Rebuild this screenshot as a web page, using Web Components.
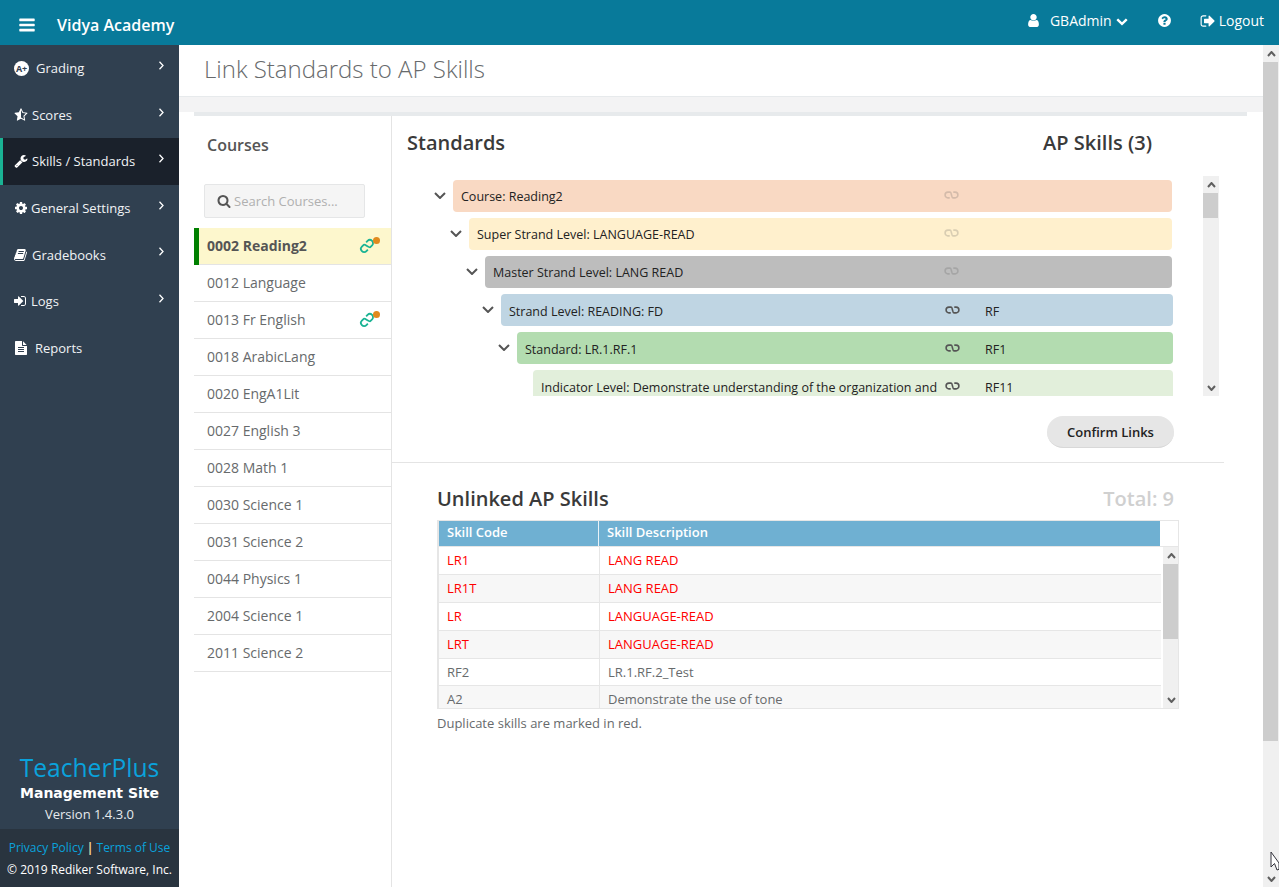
<!DOCTYPE html>
<html lang="en">
<head>
<meta charset="utf-8">
<title>Link Standards to AP Skills</title>
<style>
  html, body { margin: 0; height: 887px; overflow: hidden; background: #fff; }
  body { font-family: 'Open Sans', 'Liberation Sans', sans-serif; font-size: 13px; color: #676a6c; }
</style>
</head>
<body>
<app-shell></app-shell>
<script>
const ICONS = {
  bars: 'M1664 1344v128q0 26-19 45t-45 19h-1408q-26 0-45-19t-19-45v-128q0-26 19-45t45-19h1408q26 0 45 19t19 45zm0-512v128q0 26-19 45t-45 19h-1408q-26 0-45-19t-19-45v-128q0-26 19-45t45-19h1408q26 0 45 19t19 45zm0-512v128q0 26-19 45t-45 19h-1408q-26 0-45-19t-19-45v-128q0-26 19-45t45-19h1408q26 0 45 19t19 45z',
  user: 'M1536 1399q0 109-62.5 187t-150.5 78h-854q-88 0-150.5-78t-62.5-187q0-85 8.5-160.5t31.5-152 58.5-131 94-89 134.5-34.5q131 128 313 128t313-128q76 0 134.5 34.5t94 89 58.5 131 31.5 152 8.5 160.5zm-256-887q0 159-112.5 271.5t-271.5 112.5-271.5-112.5-112.5-271.5 112.5-271.5 271.5-112.5 271.5 112.5 112.5 271.5z',
  down: 'M1683 808l-742 741q-19 19-45 19t-45-19l-742-741q-19-19-19-45.5t19-45.5l166-165q19-19 45-19t45 19l531 531 531-531q19-19 45-19t45 19l166 165q19 19 19 45.5t-19 45.5z',
  search: 'M1216 832q0-185-131.5-316.5t-316.5-131.5-316.5 131.5-131.5 316.5 131.5 316.5 316.5 131.5 316.5-131.5 131.5-316.5zm512 832q0 52-38 90t-90 38q-54 0-90-38l-343-342q-179 124-399 124-143 0-273.5-55.5t-225-150-150-225-55.5-273.5 55.5-273.5 150-225 225-150 273.5-55.5 273.5 55.5 225 150 150 225 55.5 273.5q0 220-124 399l343 343q37 37 37 90z',
  question: 'M1024 1376v-192q0-14-9-23t-23-9h-192q-14 0-23 9t-9 23v192q0 14 9 23t23 9h192q14 0 23-9t9-23zm256-672q0-88-55.5-163t-138.5-116-170-41q-243 0-371 213-15 24 8 42l132 100q7 6 19 6 16 0 25-12 53-68 86-92 34-24 86-24 48 0 85.5 26t37.5 59q0 38-20 61t-68 45q-63 28-115.5 86.5t-52.5 125.5v36q0 14 9 23t23 9h192q14 0 23-9t9-23q0-19 21.5-49.5t54.5-49.5q32-18 49-28.5t46-35 44.5-48 28-60.5 12.5-81zm384 192q0 209-103 385.5t-279.5 279.5-385.5 103-385.5-103-279.5-279.5-103-385.5 103-385.5 279.5-279.5 385.5-103 385.5 103 279.5 279.5 103 385.5z',
  signout: 'M704 1440q0 4 1 20t.5 26.5-3 23.5-10 19.5-20.5 6.5h-320q-119 0-203.5-84.5t-84.5-203.5v-704q0-119 84.5-203.5t203.5-84.5h320q13 0 22.5 9.5t9.5 22.5q0 4 1 20t.5 26.5-3 23.5-10 19.5-20.5 6.5h-320q-66 0-113 47t-47 113v704q0 66 47 113t113 47h312l11.5 1 11.5 3 8 5.5 7 9 2 13.5zm928-544q0 26-19 45l-544 544q-19 19-45 19t-45-19-19-45v-288h-448q-26 0-45-19t-19-45v-384q0-26 19-45t45-19h448v-288q0-26 19-45t45-19 45 19l544 544q19 19 19 45z',
  signin: 'M1184 896q0 26-19 45l-544 544q-19 19-45 19t-45-19-19-45v-288h-448q-26 0-45-19t-19-45v-384q0-26 19-45t45-19h448v-288q0-26 19-45t45-19 45 19l544 544q19 19 19 45zm352-352v704q0 119-84.5 203.5t-203.5 84.5h-320q-13 0-22.5-9.5t-9.5-22.5q0-4-1-20t-.5-26.5 3-23.5 10-19.5 20.5-6.5h320q66 0 113-47t47-113v-704q0-66-47-113t-113-47h-312l-11.5-1-11.5-3-8-5.5-7-9-2-13.5q0-4-1-20t-.5-26.5 3-23.5 10-19.5 20.5-6.5h320q119 0 203.5 84.5t84.5 203.5z',
  cog: 'M1152 896q0-106-75-181t-181-75-181 75-75 181 75 181 181 75 181-75 75-181zm512-109v222q0 12-8 23t-20 13l-185 28q-19 54-39 91 35 50 107 138 10 12 10 25t-9 23q-27 37-99 108t-94 71q-12 0-26-9l-138-108q-44 23-91 38-16 136-29 186-7 28-36 28h-222q-14 0-24.5-8.5t-11.5-21.5l-28-184q-49-16-90-37l-141 107q-10 9-25 9-14 0-25-11-126-114-165-168-7-10-7-23 0-12 8-23 15-21 51-66.5t54-70.5q-27-50-41-99l-183-27q-13-2-21-12.5t-8-23.5v-222q0-12 8-23t19-13l186-28q14-46 39-92-40-57-107-138-10-12-10-24 0-10 9-23 26-36 98.5-107.5t94.5-71.5q13 0 26 10l138 107q44-23 91-38 16-136 29-186 7-28 36-28h222q14 0 24.5 8.5t11.5 21.5l28 184q49 16 90 37l142-107q9-9 24-9 13 0 25 10 129 119 165 170 7 8 7 22 0 12-8 23-15 21-51 66.5t-54 70.5q26 50 41 98l183 28q13 2 21 12.5t8 23.5z',
  wrench: 'M448 1472q0-26-19-45t-45-19-45 19-19 45 19 45 45 19 45-19 19-45zm644-420l-682 682q-37 37-90 37-52 0-91-37l-106-108q-38-36-38-90 0-53 38-91l681-681q39 98 114.5 173.5t173.5 114.5zm634-435q0 39-23 106-47 134-164.5 217.5t-258.5 83.5q-185 0-316.5-131.5t-131.5-316.5 131.5-316.5 316.5-131.5q58 0 121.5 16.5t107.5 46.5q16 11 16 28t-16 28l-293 169v224l193 107q5-3 79-48.5t135.5-81 70.5-35.5q15 0 23.5 10t8.5 25z',
  book: 'M1639 478q40 57 18 129l-275 906q-19 64-76.5 107.5t-122.5 43.5h-923q-77 0-148.5-53.5t-99.5-131.5q-24-67-2-127 0-4 3-27t4-37q1-8-3-21.5t-3-19.5q2-11 8-21t16.5-23.5 16.5-23.5q23-38 45-91.5t30-91.5q3-10 .5-30t-.5-28q3-11 17-28t17-23q21-36 42-92t25-90q1-9-2.5-32t.5-28q4-13 22-30.5t22-22.5q19-26 42.5-84.5t27.5-96.5q1-8-3-25.5t-2-26.5q2-8 9-18t18-23 17-21q8-12 16.5-30.5t15-35 16-36 19.5-32 26.5-23.5 36-11.5 47.5 5.5l-1 3q38-9 51-9h761q74 0 114 56t18 130l-274 906q-36 119-71.5 153.5t-128.5 34.5h-869q-27 0-38 15-11 16-1 43 24 70 144 70h923q29 0 56-15.5t35-41.5l300-987q7-22 5-57 38 15 59 43zm-1064 2q-4 13 2 22.5t20 9.5h608q13 0 25.5-9.5t16.5-22.5l21-64q4-13-2-22.5t-20-9.5h-608q-13 0-25.5 9.5t-16.5 22.5zm-83 256q-4 13 2 22.5t20 9.5h608q13 0 25.5-9.5t16.5-22.5l21-64q4-13-2-22.5t-20-9.5h-608q-13 0-25.5 9.5t-16.5 22.5z',
  file: 'M1596 476q14 14 28 36h-472v-472q22 14 36 28zm-476 164h544v1056q0 40-28 68t-68 28h-1344q-40 0-68-28t-28-68v-1600q0-40 28-68t68-28h800v544q0 40 28 68t68 28zm160 736v-64q0-14-9-23t-23-9h-704q-14 0-23 9t-9 23v64q0 14 9 23t23 9h704q14 0 23-9t9-23zm0-256v-64q0-14-9-23t-23-9h-704q-14 0-23 9t-9 23v64q0 14 9 23t23 9h704q14 0 23-9t9-23zm0-256v-64q0-14-9-23t-23-9h-704q-14 0-23 9t-9 23v64q0 14 9 23t23 9h704q14 0 23-9t9-23z',
  star: 'M1250 957l257-250-356-52-66-10-30-60-159-322v963l59 31 318 168-60-355-12-66zm452-262l-363 354 86 500q5 33-6 51.5t-34 18.5q-17 0-40-12l-449-236-449 236q-23 12-40 12-23 0-34-18.5t-6-51.5l86-500-364-354q-32-32-23-59.5t54-34.5l502-73 225-455q20-41 49-41 28 0 49 41l225 455 502 73q45 7 54 34.5t-24 59.5z',
}

function icon(name, size, color) {
  return `<svg width="${size}" height="${size}" viewBox="0 0 1792 1792" style="display:block;flex:none"><path fill="${color}" d="${ICONS[name]}"/></svg>`
}

// chain drawn as one S shaped stroke, horizontal unless rotated
function chain(color, rotate) {
  const t = rotate ? `transform="rotate(${rotate} 8 8)"` : ''
  const y = rotate ? 3.5 : 0
  const h = rotate ? 16 : 9
  return `<svg width="${rotate ? 16 : 15}" height="${rotate ? 16 : 8}" viewBox="0 0 16 ${h}" style="display:block;flex:none"><g ${t}><g transform="translate(0 ${y})" fill="none" stroke="${color}" stroke-width="1.8">
    <path d="M6 7.7H4a3.2 3.2 0 0 1 0-6.4H6.5C8 1.3 8 7.7 9.5 7.7H12a3.2 3.2 0 0 0 0-6.4H10"/>
  </g></g></svg>`
}

function chevron(w, h, color, sw, up) {
  const pts = up ? `1,${h - 1} ${w / 2},1 ${w - 1},${h - 1}` : `1,1 ${w / 2},${h - 1} ${w - 1},1`
  return `<svg width="${w}" height="${h}" viewBox="0 0 ${w} ${h}" style="display:block;flex:none"><polyline points="${pts}" fill="none" stroke="${color}" stroke-width="${sw}"/></svg>`
}

class BaseEl extends HTMLElement {
  connectedCallback() {
    if (!this.shadowRoot) this.attachShadow({ mode: 'open' })
    this.shadowRoot.innerHTML = this.render()
  }
}

class FakeScrollbar extends BaseEl {
  render() {
    const before = this.getAttribute('before') ?? 0
    const thumb = this.getAttribute('thumb') ?? 0
    const w = this.getAttribute('thumb-width') ?? 15
    return `
      <style>
        :host { display: flex; flex-direction: column; background: #f0f0f0; flex: none; }
        .btn { height: 17px; display: flex; align-items: center; justify-content: center; flex: none; }
        .track { flex: 1; }
        .thumb { background: #cdcdcd; width: ${w}px; height: ${thumb}px; margin-top: ${before}px; }
      </style>
      <div class="btn">${chevron(9, 6, '#606060', 2, true)}</div>
      <div class="track"><div class="thumb"></div></div>
      <div class="btn">${chevron(9, 6, '#606060', 2)}</div>
    `
  }
}

class AppTopbar extends BaseEl {
  render() {
    return `
      <style>
        :host { display: flex; align-items: center; height: 45px; background: #087a9a; color: #fff; font-size: 14px; flex: none; }
        .burger { margin-left: 18px; position: relative; top: 2px; }
        .brand { margin-left: 21px; font-size: 16px; font-weight: 600; position: relative; top: 2px; }
        .right { margin-left: auto; display: flex; align-items: center; padding-right: 15px; margin-top: -4px; }
        .item { display: flex; align-items: center; }
      </style>
      <div class="burger">${icon('bars', 18, '#fff')}</div>
      <div class="brand">Vidya Academy</div>
      <div class="right">
        <div class="item" style="gap:9px">${icon('user', 15, '#fff')}<span>GBAdmin</span></div>
        <div class="item" style="margin-left:4px">${icon('down', 12, '#fff')}</div>
        <div class="item" style="margin-left:29px">${icon('question', 15, '#fff')}</div>
        <div class="item" style="margin-left:28px;gap:3px">${icon('signout', 16, '#fff')}<span>Logout</span></div>
      </div>
    `
  }
}

class NavItem extends BaseEl {
  render() {
    const ic = this.getAttribute('icon')
    const tx = +this.getAttribute('tx')
    const active = this.hasAttribute('active')
    const arrow = !this.hasAttribute('no-arrow')
    const glyph = ic === 'grade'
      ? `<span class="grade">A+</span>`
      : icon(ic, +(this.getAttribute('size') ?? 14), '#fff')
    return `
      <style>
        :host { display: flex; align-items: center; height: 46.6px; padding: 0 0 0.3px 14px; box-sizing: border-box; color: #f1f3f5; font-size: 13px; position: relative; ${active ? 'background: #1a212b;' : ''} }
        .bar { position: absolute; left: 0; top: 0; bottom: 0; width: 3px; background: #1ab394; }
        .ic { width: ${tx - 14}px; flex: none; }
        .grade { display: flex; align-items: center; justify-content: center; width: 15px; height: 15px; border-radius: 50%; background: #fff; color: #2f4050; font-size: 9px; font-weight: 700; letter-spacing: -.3px; }
        .arrow { position: absolute; left: 158px; top: 16px; }
      </style>
      ${active ? '<div class="bar"></div>' : ''}
      <div class="ic">${glyph}</div>
      <span><slot></slot></span>
      ${arrow ? `<svg class="arrow" width="7" height="9" viewBox="0 0 7 9"><polyline points="1.5,.8 5,4.5 1.5,8.2" fill="none" stroke="#fff" stroke-width="1.3"/></svg>` : ''}
    `
  }
}

class AppSidebar extends BaseEl {
  render() {
    return `
      <style>
        :host { display: flex; flex-direction: column; width: 179px; flex: none; background: #304050; color: #fff; }
        .foot { margin-top: auto; text-align: center; padding-bottom: 4px; }
        .tp { font-size: 24.6px; font-weight: 500; line-height: 30px; color: #0aa2dc; }
        .ms { font-family: 'DejaVu Sans', sans-serif; font-size: 14px; font-weight: 700; line-height: 20px; }
        .ver { font-size: 13px; line-height: 22px; color: #e6eaed; }
        .legal { height: 58px; box-sizing: border-box; background: #29343f; text-align: center; font-size: 12px; padding-top: 8px; line-height: 22px; white-space: nowrap; }
        .legal a { color: #0aa2dc; }
        .legal i { font-style: normal; font-weight: 700; color: #f3d9a0; }
      </style>
      <slot></slot>
      <div class="foot">
        <div class="tp">TeacherPlus</div>
        <div class="ms">Management Site</div>
        <div class="ver">Version 1.4.3.0</div>
      </div>
      <div class="legal">
        <div><a>Privacy Policy</a> <i>|</i> <a>Terms of Use</a></div>
        <div>© 2019 Rediker Software, Inc.</div>
      </div>
    `
  }
}

class CourseItem extends BaseEl {
  render() {
    const selected = this.hasAttribute('selected')
    const linked = this.hasAttribute('linked')
    return `
      <style>
        :host { display: flex; align-items: center; height: 37px; box-sizing: border-box; border-bottom: 1px solid #e4e4e4; padding: 0 0 2px 13px; font-size: 14px; color: #676a6c; position: relative; ${selected ? 'background: #fdf7cd; font-weight: 700; color: #555;' : ''} }
        .mark { position: absolute; left: 0; top: 0; bottom: -1px; width: 5px; background: #008000; }
        .ln { position: absolute; left: 165px; top: 10px; }
        .dot { position: absolute; left: 179px; top: 9px; width: 7px; height: 7px; border-radius: 50%; background: #e08a1e; }
      </style>
      ${selected ? '<div class="mark"></div>' : ''}
      <span><slot></slot></span>
      ${linked ? `<div class="ln">${chain('#1ab394', -45)}</div><div class="dot"></div>` : ''}
    `
  }
}

class CoursePanel extends BaseEl {
  render() {
    return `
      <style>
        :host { display: block; width: 197px; flex: none; border-right: 1px solid #e4e4e4; }
        h3 { margin: 0; padding: 18px 0 0 13px; font-size: 16px; line-height: 22px; font-weight: 600; color: #555; }
        .search { display: flex; align-items: center; gap: 3px; margin: 28px 26px 10px 10px; height: 34px; box-sizing: border-box; padding-left: 12px; background: #f5f5f5; border: 1px solid #e5e6e7; border-radius: 2px; color: #b0b0b0; font-size: 13px; }
      </style>
      <h3>Courses</h3>
      <div class="search">${icon('search', 14, '#555')}<span>Search Courses...</span></div>
      <slot></slot>
    `
  }
}

class TreeRow extends BaseEl {
  render() {
    const depth = +this.getAttribute('depth')
    const color = this.getAttribute('color')
    const ap = this.getAttribute('ap') ?? ''
    const right = +(this.getAttribute('right') ?? 31)
    const muted = this.hasAttribute('muted')
    const leaf = this.hasAttribute('leaf')
    const drop = depth >= 3 ? 1 : 0
    return `
      <style>
        :host { display: flex; margin-left: ${39 + depth * 16}px; margin-right: ${right}px; margin-bottom: 6px; }
        .tog { width: 22px; flex: none; padding-top: 12px; padding-left: 3px; box-sizing: border-box; }
        .box { flex: 1; min-width: 0; display: flex; height: 32px; background: ${color}; border-radius: 4px; color: #222; font-size: 12.5px; line-height: 17px; }
        .label { flex: 1; min-width: 0; padding: ${8 + drop}px 0 0 8px; white-space: nowrap; }
        .ln { width: ${41 - drop}px; flex: none; padding: ${11 + drop}px 0 0 ${drop}px; ${muted ? 'opacity: .22;' : ''} }
        .ap { width: ${218 - right}px; flex: none; padding-top: 9px; }
      </style>
      <div class="tog">${leaf ? '' : chevron(12, 7, '#555', 2)}</div>
      <div class="box">
        <div class="label"><slot></slot></div>
        <div class="ln">${chain('#555')}</div>
        <div class="ap">${ap}</div>
      </div>
    `
  }
}

class StandardsTree extends BaseEl {
  render() {
    return `
      <style>
        :host { display: flex; height: 220px; margin-left: 0; }
        .scroll { width: 811px; flex: none; overflow: hidden; padding-top: 4px; box-sizing: border-box; }
        fake-scrollbar { width: 16px; }
      </style>
      <div class="scroll"><slot></slot></div>
      <fake-scrollbar before="0" thumb="25"></fake-scrollbar>
    `
  }
}

class SkillTable extends BaseEl {
  render() {
    const rows = JSON.parse(this.getAttribute('rows') ?? '[]')
    return `
      <style>
        :host { display: flex; flex-direction: column; width: 742px; height: 189px; box-sizing: border-box; border: 1px solid #e6e6e6; border-left-width: 2px; overflow: hidden; font-size: 13px; }
        .head { display: flex; height: 26px; box-sizing: border-box; flex: none; border-bottom: 1px solid #e6e6e6; }
        .head .cols { width: 721px; display: grid; grid-template-columns: 159px 1fr; background: #6fb0d2; color: #fff; font-weight: 600; line-height: 23px; }
        .head .c { padding-left: 8px; }
        .head .c + .c { border-left: 1px solid #e8f2f8; }
        .body { flex: 1; min-height: 0; display: flex; }
        .rows { width: 722px; flex: none; overflow: hidden; }
        .row { display: grid; grid-template-columns: 160px 1fr; height: 27.88px; box-sizing: border-box; border-bottom: 1px solid #e6e6e6; line-height: 27px; color: #676a6c; }
        .row:nth-child(even) { background: #f7f7f7; }
        .row.dup { color: #f00; }
        .row .c { padding-left: 8px; }
        .row .c + .c { border-left: 1px solid #e6e6e6; }
        fake-scrollbar { width: 16px; margin-left: 2px; }
      </style>
      <div class="head"><div class="cols"><div class="c">Skill Code</div><div class="c">Skill Description</div></div></div>
      <div class="body">
        <div class="rows">
          ${rows.map(r => `<div class="row ${r[2] ? 'dup' : ''}"><div class="c">${r[0]}</div><div class="c">${r[1]}</div></div>`).join('')}
        </div>
        <fake-scrollbar before="0" thumb="75"></fake-scrollbar>
      </div>
    `
  }
}

class StandardsPanel extends BaseEl {
  render() {
    return `
      <style>
        :host { display: block; flex: 1; min-width: 0; }
        .top { width: 832px; height: 347px; box-sizing: border-box; border-bottom: 1px solid #e4e4e4; }
        .heads { display: flex; height: 60px; font-size: 20px; font-weight: 600; color: #3a3a3a; line-height: 27px; padding: 13px 0 0 15px; box-sizing: border-box; }
        .heads span + span { margin-left: 538px; }
        .act { display: flex; justify-content: flex-end; padding: 20px 50px 0 0; }
        button { width: 127px; height: 32px; border: 0; border-bottom: 1px solid #d8d8d8; border-radius: 16px; background: #e6e6e6; font: 600 13px 'Open Sans', sans-serif; color: #222; padding: 0; }
        .bottom { padding: 22px 0 0 45px; }
        .tt { display: flex; width: 737px; justify-content: space-between; font-size: 20px; font-weight: 600; line-height: 27px; color: #3a3a3a; margin-bottom: 8px; }
        .tt i { font-style: normal; font-weight: 600; font-size: 20px; color: #d0d0d0; }
        .note { margin-top: 6px; font-size: 13px; color: #676a6c; line-height: 17px; }
      </style>
      <div class="top">
        <div class="heads"><span>Standards</span><span>AP Skills (3)</span></div>
        <slot name="tree"></slot>
        <div class="act"><button>Confirm Links</button></div>
      </div>
      <div class="bottom">
        <div class="tt"><span>Unlinked AP Skills</span><i>Total: 9</i></div>
        <slot name="table"></slot>
        <div class="note">Duplicate skills are marked in red.</div>
      </div>
    `
  }
}

class AppShell extends BaseEl {
  render() {
    const rows = [
      ['LR1', 'LANG READ', 1], ['LR1T', 'LANG READ', 1], ['LR', 'LANGUAGE-READ', 1], ['LRT', 'LANGUAGE-READ', 1],
      ['RF2', 'LR.1.RF.2_Test'], ['A2', 'Demonstrate the use of tone'],
    ]
    const courses = ['0012 Language', '0013 Fr English', '0018 ArabicLang', '0020 EngA1Lit', '0027 English 3', '0028 Math 1',
      '0030 Science 1', '0031 Science 2', '0044 Physics 1', '2004 Science 1', '2011 Science 2']
    return `
      <style>
        :host { display: flex; flex-direction: column; width: 1279px; height: 887px; overflow: hidden; position: relative; }
        .under { flex: 1; min-height: 0; display: flex; }
        main { flex: 1; min-width: 0; display: flex; flex-direction: column; }
        .title { height: 52px; box-sizing: border-box; flex: none; border-bottom: 1px solid #e7eaec; padding-left: 25px; font-size: 24px; font-weight: 300; line-height: 48px; color: #676a6c; }
        .band { height: 15px; flex: none; background: #f3f3f4; }
        .content { flex: 1; min-height: 0; margin: 0 16px 0 15px; border-top: 4px solid #e7eaec; display: flex; }
        fake-scrollbar.page { width: 16px; }
        .cursor { position: absolute; left: 1270px; top: 851px; }
      </style>
      <app-topbar></app-topbar>
      <div class="under">
        <app-sidebar>
          <nav-item icon="grade" tx="36">Grading</nav-item>
          <nav-item icon="star" tx="32">Scores</nav-item>
          <nav-item icon="wrench" tx="32" active>Skills / Standards</nav-item>
          <nav-item icon="cog" tx="31">General Settings</nav-item>
          <nav-item icon="book" tx="32">Gradebooks</nav-item>
          <nav-item icon="signin" tx="31">Logs</nav-item>
          <nav-item icon="file" tx="35" no-arrow>Reports</nav-item>
        </app-sidebar>
        <main>
          <div class="title">Link Standards to AP Skills</div>
          <div class="band"></div>
          <div class="content">
            <course-panel>
              <course-item selected linked>0002 Reading2</course-item>
              ${courses.map((c, i) => `<course-item ${i === 1 ? 'linked' : ''}>${c}</course-item>`).join('')}
            </course-panel>
            <standards-panel>
              <standards-tree slot="tree">
                <tree-row depth="0" right="31" color="#f9d9c3" muted>Course: Reading2</tree-row>
                <tree-row depth="1" right="31" color="#fff0cd" muted>Super Strand Level: LANGUAGE-READ</tree-row>
                <tree-row depth="2" right="31" color="#bdbdbd" muted>Master Strand Level: LANG READ</tree-row>
                <tree-row depth="3" right="30" color="#bfd5e3" ap="RF">Strand Level: READING: FD</tree-row>
                <tree-row depth="4" right="30" color="#b3dcb0" ap="RF1">Standard: LR.1.RF.1</tree-row>
                <tree-row depth="5" right="30" color="#e2efdb" ap="RF11" leaf>Indicator Level: Demonstrate understanding of the organization and</tree-row>
              </standards-tree>
              <skill-table slot="table" rows='${JSON.stringify(rows)}'></skill-table>
            </standards-panel>
          </div>
        </main>
        <fake-scrollbar class="page" before="0" thumb="679"></fake-scrollbar>
      </div>
      <svg class="cursor" width="9" height="20" viewBox="0 0 9 20"><path d="M1 1V16L4.5 12.5L7 19L9 18.3V12H9L1 1Z" fill="#fff" stroke="#33333c" stroke-width="1"/></svg>
    `
  }
}

customElements.define('fake-scrollbar', FakeScrollbar)
customElements.define('app-topbar', AppTopbar)
customElements.define('nav-item', NavItem)
customElements.define('app-sidebar', AppSidebar)
customElements.define('course-item', CourseItem)
customElements.define('course-panel', CoursePanel)
customElements.define('tree-row', TreeRow)
customElements.define('standards-tree', StandardsTree)
customElements.define('skill-table', SkillTable)
customElements.define('standards-panel', StandardsPanel)
customElements.define('app-shell', AppShell)
</script>
</body>
</html>
